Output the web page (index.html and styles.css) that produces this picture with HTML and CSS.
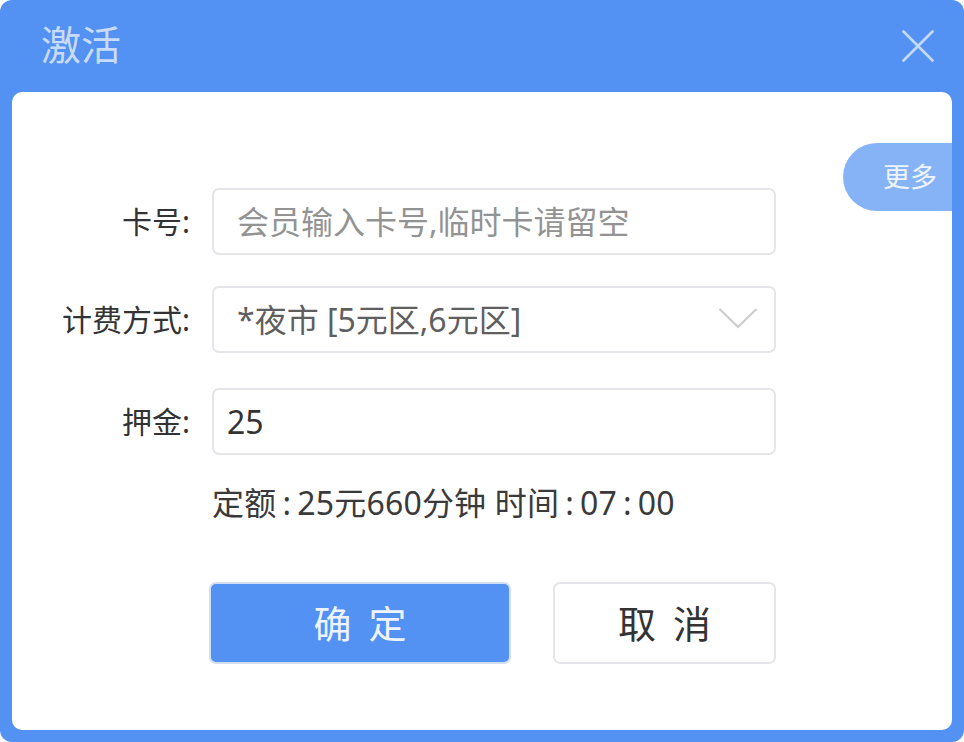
FILE: index.html
```html
<!DOCTYPE html>
<html lang="zh">
<head>
<meta charset="utf-8">
<title>激活</title>
<link rel="stylesheet" href="styles.css">
</head>
<body>
<div class="dialog">
  <div class="header">
    <div class="title">激活</div>
    <svg class="close" width="32" height="32" viewBox="0 0 32 32">
      <path d="M1.5 1.5 L30.5 30.5 M30.5 1.5 L1.5 30.5" stroke="#C5DAFA" stroke-width="2.6" fill="none" stroke-linecap="round"/>
    </svg>
  </div>
  <div class="panel">
    <div class="more">更多</div>
    <div class="row r1">
      <div class="label">卡号:</div>
      <div class="field"><span class="placeholder">会员输入卡号,临时卡请留空</span></div>
    </div>
    <div class="row r2">
      <div class="label">计费方式:</div>
      <div class="field select">
        <span class="value">*夜市 [5元区,6元区]</span>
        <svg class="chev" width="40" height="22" viewBox="0 0 40 22">
          <polyline points="1.5,2 20,20 38.5,2" fill="none" stroke="#CDCDCD" stroke-width="2.2"/>
        </svg>
      </div>
    </div>
    <div class="row r3">
      <div class="label">押金:</div>
      <div class="field deposit"><span class="num">25</span></div>
    </div>
    <div class="info">定额<span class="c">:</span>25元660分钟 时间<span class="c">:</span>07<span class="c">:</span>00</div>
    <div class="buttons">
      <div class="btn ok">确定</div>
      <div class="btn cancel">取消</div>
    </div>
  </div>
</div>
</body>
</html>
```

FILE: styles.css
```css
html, body {
  margin: 0;
  padding: 0;
  background: #ffffff;
}

body {
  font-family: "Noto Sans", "Noto Sans CJK SC", sans-serif;
}

.dialog {
  width: 964px;
  height: 742px;
  background: #5391F2;
  border-radius: 12px;
  display: flex;
  flex-direction: column;
  overflow: hidden;
}

.header {
  height: 92px;
  flex: none;
  display: flex;
  align-items: center;
  justify-content: space-between;
  padding: 0 30px 0 41px;
  box-sizing: border-box;
}

.title {
  font-size: 40px;
  line-height: 1;
  color: #C8DCFA;
  margin-top: -2px;
}

.close {
  display: block;
  margin-top: -1px;
}

.panel {
  flex: 1;
  margin: 0 12px 12px;
  background: #ffffff;
  border-radius: 10px;
  position: relative;
  padding-top: 96px;
  box-sizing: border-box;
}

.more {
  position: absolute;
  right: 0;
  top: 51px;
  width: 109px;
  height: 68px;
  box-sizing: border-box;
  padding-left: 40px;
  border-radius: 34px 0 0 34px;
  background: #86B3F5;
  color: #EEF4FE;
  font-size: 27px;
  line-height: 68px;
}

.row {
  display: flex;
  align-items: center;
  height: 67px;
}

.r2 { margin-top: 31px; }
.r3 { margin-top: 35px; }

.label {
  width: 178px;
  margin-right: 22px;
  text-align: right;
  font-size: 30px;
  color: #333333;
  line-height: 1;
}

.field {
  width: 564px;
  height: 67px;
  box-sizing: border-box;
  border: 2px solid #E5E5EA;
  border-radius: 7px;
  display: flex;
  align-items: center;
  padding-left: 23px;
  font-size: 32px;
  line-height: 1;
}

.placeholder {
  color: #939393;
}

.select {
  justify-content: space-between;
  padding-right: 16px;
}

.value {
  color: #5f5f5f;
}

.chev {
  display: block;
  margin-top: -4px;
}

.deposit {
  padding-left: 13px;
}

.num {
  color: #333333;
}

.info {
  margin: 28px 0 0 200px;
  font-size: 32px;
  line-height: 40px;
  color: #3a3a3a;
  letter-spacing: 0.2px;
}

.c {
  margin: 0 6px;
}

.buttons {
  display: flex;
  margin: 59px 0 0 197px;
}

.btn {
  height: 82px;
  box-sizing: border-box;
  border-radius: 7px;
  display: flex;
  align-items: center;
  justify-content: center;
  font-size: 38px;
  letter-spacing: 17px;
  text-indent: 17px;
  line-height: 1;
}

.ok {
  width: 302px;
  background: #5391F2;
  border: 2px solid #D3DEEE;
  color: #EEF4FE;
}

.cancel {
  width: 223px;
  margin-left: 42px;
  background: #ffffff;
  border: 2px solid #E5E5EA;
  color: #333333;
}
```
